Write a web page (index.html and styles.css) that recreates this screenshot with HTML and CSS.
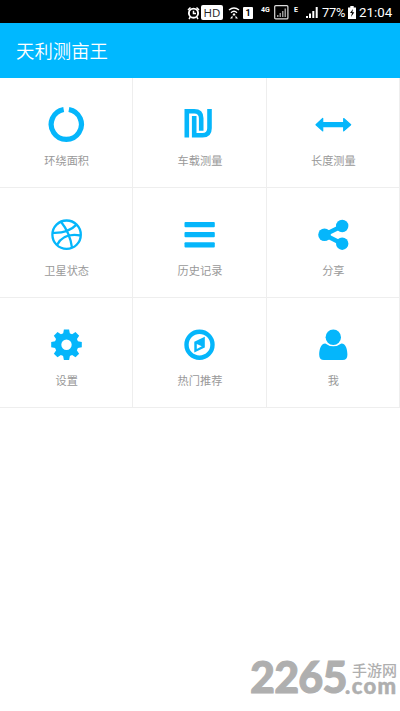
FILE: index.html
```html
<!DOCTYPE html>
<html lang="zh-CN">
<head>
<meta charset="utf-8">
<title>天利测亩王</title>
<link rel="stylesheet" href="styles.css">
</head>
<body>
<div class="status">
  <svg class="alarm" width="13" height="14" viewBox="0 0 13 14"><circle cx="6.5" cy="7.2" r="4.6" fill="none" stroke="#fff" stroke-width="1.9"/><path d="M1 4 3.5 1.5M12 4 9.5 1.5M3.2 11.2 2 13M9.8 11.2 11 13M6.5 4.8V7.5H9" fill="none" stroke="#fff" stroke-width="1.5"/></svg>
  <span class="hd">HD</span>
  <svg class="wifi" width="12" height="14" viewBox="0 0 12 14"><path d="M1 4Q6 0 11 4M3 6.7Q6 4 9 6.7" fill="none" stroke="#fff" stroke-width="1.4"/><path d="M4.5 8.5 6 7 7.5 8.5 6 10ZM2 12.5 4.5 9.5V12.5ZM10 12.5 7.5 9.5V12.5Z" fill="#fff"/></svg>
  <span class="sim">1</span>
  <span class="net net-4g">4G</span>
  <svg class="boxed" width="15" height="15" viewBox="0 0 15 15"><rect x=".7" y=".7" width="13.2" height="13.2" rx="1" fill="none" stroke="#ddd" stroke-width="1.2"/><path d="M3 12V10H4.5V12ZM5.5 12V8H7V12ZM8 12V6H9.5V12ZM10.5 12V3.5H12V12Z" fill="#999"/></svg>
  <span class="net net-e">E</span>
  <svg class="signal" width="13" height="13" viewBox="0 0 13 13"><path d="M0 12V10H2V12ZM3 12V7.5H5V12ZM6.3 12V5H8.3V12ZM9.7 12V1H11.7V12Z" fill="#fff"/></svg>
  <span class="num percent">77%</span>
  <svg class="battery" width="8" height="13" viewBox="0 0 8 13"><path d="M2.3 0H5.7V1.5H8V13H0V1.5H2.3Z" fill="#fff"/><path d="M5 3 2 7H4L3 11 6.3 6.2H4.3Z" fill="#000"/></svg>
  <span class="num clock">21:04</span>
</div>
<header class="title">天利测亩王</header>
<main class="grid">
  <div class="cell"><svg viewBox="0 0 40 40"><path d="M17.7 4.5A15.1 15.1 0 1 0 22.9 4.5" fill="none" stroke="currentColor" stroke-width="5.2"/></svg><span>环绕面积</span></div>
  <div class="cell"><svg viewBox="0 0 40 40"><path d="M7.8 32.5V6.3H15.2Q22.2 6.3 22.2 13.3V25.7M15.2 11V30.3H23.5Q30.5 30.3 30.5 23.3V4.1" fill="none" stroke="currentColor" stroke-width="4.6"/></svg><span>车载测量</span></div>
  <div class="cell"><svg viewBox="0 0 40 40"><path d="M3 19.7 9.7 13.5V17.7H30.7V13.5L37.7 19.7 30.7 25.9V21.7H9.7V25.9Z" fill="currentColor" stroke="currentColor" stroke-width="1.2" stroke-linejoin="round"/></svg><span>长度测量</span></div>
  <div class="cell"><svg viewBox="0 0 40 40"><g fill="none" stroke="currentColor" stroke-width="2.3"><circle cx="20.6" cy="19.7" r="14.2"/><path d="M15 6.8Q24 18 26 32.6M6.6 17.8Q22 18.5 30.5 9.6M11 30.1Q17 17.5 34.7 20.5"/></g></svg><span>卫星状态</span></div>
  <div class="cell"><svg viewBox="0 0 40 40"><g fill="currentColor"><rect x="5.5" y="7" width="30.3" height="5.2" rx="1"/><rect x="5.5" y="17.1" width="30.3" height="5.2" rx="1"/><rect x="5.5" y="27.2" width="30.3" height="5.2" rx="1"/></g></svg><span>历史记录</span></div>
  <div class="cell"><svg viewBox="0 0 40 40"><path d="M29.2 11 11.5 19.7 29.2 28.7" fill="none" stroke="currentColor" stroke-width="4.4"/><g fill="currentColor"><circle cx="11.5" cy="19.7" r="6.3"/><circle cx="29.2" cy="11" r="6.2"/><circle cx="29.2" cy="28.7" r="6.2"/></g></svg><span>分享</span></div>
  <div class="cell"><svg viewBox="0 0 40 40"><circle cx="20.5" cy="19.7" r="8.5" fill="none" stroke="currentColor" stroke-width="6.6"/><g fill="currentColor" transform="translate(20.5 19.7)"><path id="tooth" d="M-3.6-10 -2.6-15.3H2.6L3.6-10Z"/><use href="#tooth" transform="rotate(45)"/><use href="#tooth" transform="rotate(90)"/><use href="#tooth" transform="rotate(135)"/><use href="#tooth" transform="rotate(180)"/><use href="#tooth" transform="rotate(225)"/><use href="#tooth" transform="rotate(270)"/><use href="#tooth" transform="rotate(315)"/></g></svg><span>设置</span></div>
  <div class="cell"><svg viewBox="0 0 40 40"><circle cx="20.5" cy="19.7" r="13" fill="none" stroke="currentColor" stroke-width="4.4"/><path fill="currentColor" fill-rule="evenodd" d="M25.8 11.8V22.6L15.3 27.6V16.8ZM17.8 18.9V24L22.8 21.2Z"/></svg><span>热门推荐</span></div>
  <div class="cell"><svg viewBox="0 0 40 40"><g fill="currentColor"><path d="M12.3 18.4Q20.2 24.3 28.4 18.4C33 18.6 34.4 24.5 34.4 29.8Q34.4 35 29.7 35H10.9Q6.2 35 6.2 29.8C6.2 24.5 7.8 18.6 12.3 18.4Z"/><circle cx="20.3" cy="12.3" r="7.7"/></g></svg><span>我</span></div>
</main>
<div class="watermark">
  <span class="digits">2265</span>
  <div class="site"><span class="site-name">手游网</span><span class="domain">.com</span></div>
</div>
</body>
</html>
```
FILE: styles.css
```css
* { box-sizing: border-box; }
body {
  margin: 0;
  height: 711px;
  overflow: hidden;
  background: #fff;
  font-family: Roboto, "Noto Sans CJK SC", sans-serif;
}
svg { display: block; flex: none; }
.status {
  display: flex;
  align-items: center;
  height: 23px;
  padding: 2px 0 0 187px;
  background: #000;
  color: #fff;
  white-space: nowrap;
}
.status > * { flex: none; }
.hd {
  width: 22px;
  height: 15px;
  margin-left: 1px;
  border-radius: 2px;
  background: #fff;
  color: #222;
  font: 11.5px/15px "Open Sans", sans-serif;
  text-align: center;
}
.wifi { margin-left: 5px; }
.sim {
  width: 10px;
  height: 12px;
  margin-left: 3px;
  border-radius: 1px;
  background: #fff;
  color: #000;
  font-size: 9px;
  font-weight: 700;
  line-height: 12px;
  text-align: center;
}
.net {
  height: 15px;
  font-size: 7px;
  font-weight: 700;
  line-height: 10px;
}
.net-4g { width: 10px; margin-left: 8px; }
.boxed { margin-left: 3px; }
.net-e { width: 5px; margin-left: 5px; }
.signal { margin-left: 7px; }
.num { line-height: 21px; }
.percent { width: 24px; margin-left: 3px; font-size: 12.8px; letter-spacing: -.2px; }
.battery { margin-left: 2px; }
.clock { margin-left: 3px; font-size: 13.3px; }
.title {
  height: 55px;
  padding-left: 16px;
  background: #00b8ff;
  color: #fff;
  font-size: 18.4px;
  font-weight: 350;
  line-height: 58px;
}
.grid {
  display: grid;
  grid-template-columns: repeat(3, 1fr);
  grid-auto-rows: 110px;
}
.cell {
  display: flex;
  flex-direction: column;
  align-items: center;
  padding-top: 27px;
  border-right: 1px solid #eee;
  border-bottom: 1px solid #eee;
  color: #05b6fb;
}
.cell svg { width: 40px; height: 40px; }
.cell span {
  margin-top: 8px;
  padding-left: 1px;
  color: #999;
  font-size: 11.2px;
  line-height: 17px;
}
.watermark {
  position: absolute;
  left: 250px;
  top: 655px;
  display: flex;
  color: #afafaf;
}
.digits {
  width: 95px;
  font: 900 43px/44px Lato, sans-serif;
  letter-spacing: -.8px;
  -webkit-text-stroke: 1px #afafaf;
}
.site { display: flex; flex-direction: column; padding-top: 8px; }
.site-name {
  padding-left: 7px;
  font-size: 15px;
  font-weight: 500;
  line-height: 17px;
}
.domain {
  font: 900 22px/12px Lato, sans-serif;
  letter-spacing: 1.4px;
  -webkit-text-stroke: .5px #afafaf;
}
```
